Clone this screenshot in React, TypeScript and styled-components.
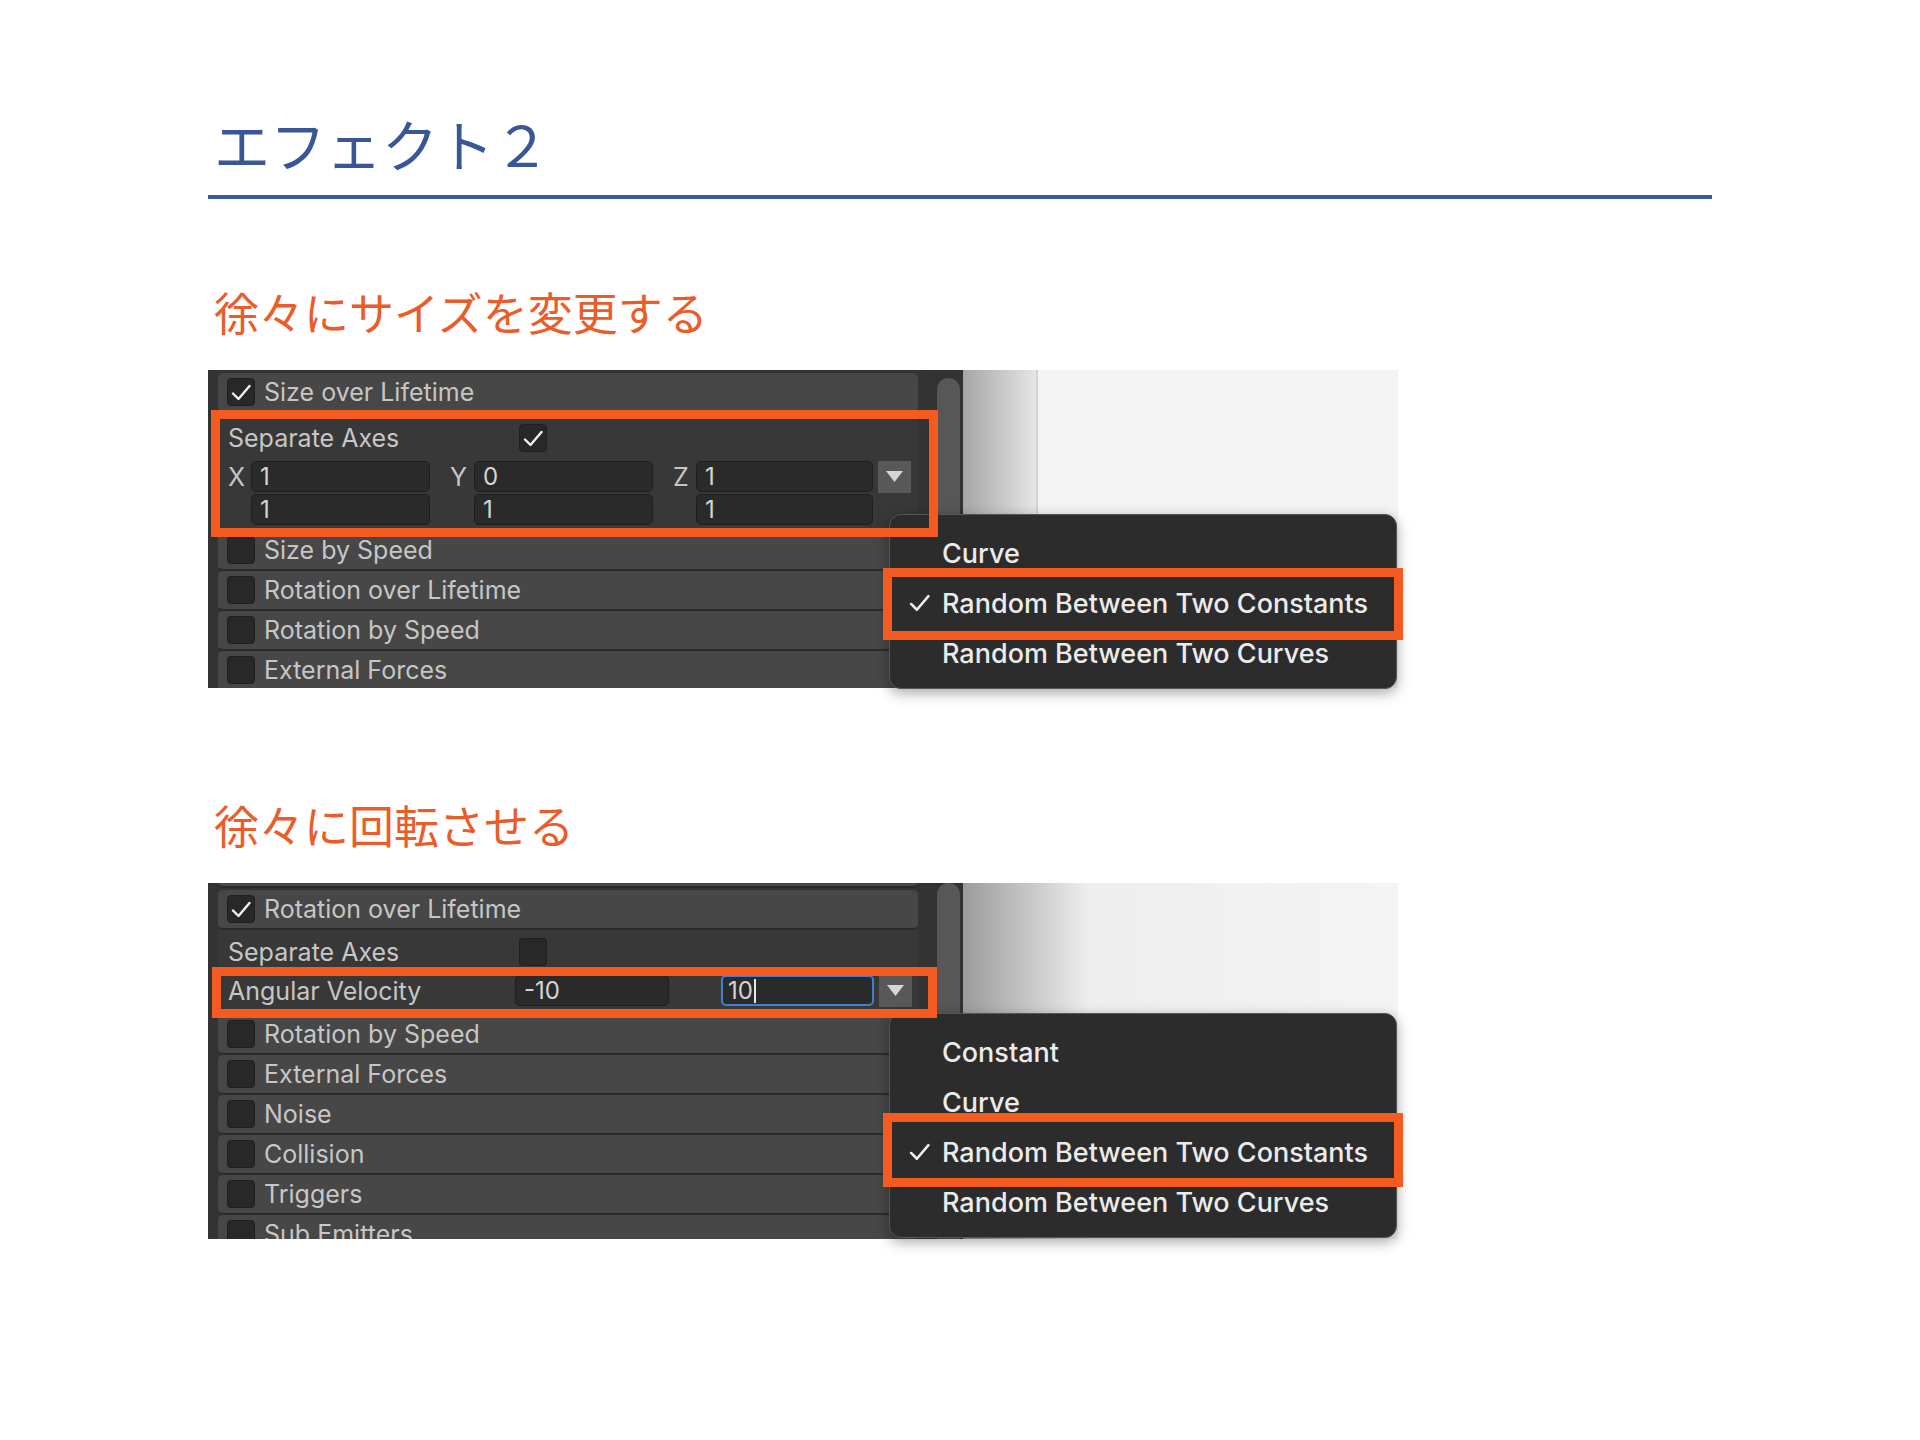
import React from "react";
import styled, { createGlobalStyle } from "styled-components";

const GlobalStyle = createGlobalStyle`
	body {
		margin: 0;
		background: #ffffff;
		font-family: "Noto Sans CJK JP", "Noto Sans", sans-serif;
	}
`;

const Page = styled.div`
	padding: 115px 0 160px 208px;
	width: 1504px;
`;

const Title = styled.h1`
	margin: 0 0 0 6px;
	font-size: 56px;
	line-height: 56px;
	font-weight: 400;
	color: #3a5795;
`;

const Rule = styled.div`
	margin-top: 24px;
	height: 4px;
	background: #3b5a98;
`;

const Heading = styled.h2<{ $top: number }>`
	margin: ${(p) => p.$top}px 0 36px 6px;
	font-size: 45px;
	line-height: 44px;
	font-weight: 400;
	color: #ea5d2a;
`;

const Panel = styled.div<{ $height: number }>`
	position: relative;
	display: flex;
	width: 1190px;
	height: ${(p) => p.$height}px;
`;

const Inspector = styled.div`
	display: flex;
	width: 755px;
	background: #383838;
	overflow: hidden;
`;

const InspectorBody = styled.div<{ $top: number }>`
	display: flex;
	flex-direction: column;
	width: 727px;
	box-sizing: border-box;
	padding: ${(p) => p.$top}px 17px 0 10px;
	background: #333333;
`;

const ScrollTrack = styled.div`
	width: 28px;
	padding: 0 3px 0 2px;
	box-sizing: border-box;
	background: #323232;
`;

const ScrollThumb = styled.div<{ $top: number }>`
	margin-top: ${(p) => p.$top}px;
	height: 100%;
	border-radius: 12px 12px 0 0;
	background: #575757;
`;

const Backdrop = styled.div<{ $stops: string }>`
	flex: 1;
	background: linear-gradient(to right, ${(p) => p.$stops});
`;

const Row = styled.div`
	flex-shrink: 0;
	display: flex;
	align-items: center;
	gap: 9px;
	height: 38px;
	padding-left: 9px;
	border-bottom: 2px solid #2a2a2a;
	border-radius: 5px;
	background: #474747;
	font-family: Inter, "Liberation Sans", sans-serif;
	font-size: 25px;
	color: #c6c6c6;
	white-space: nowrap;
`;

const Sliver = styled.div`
	flex-shrink: 0;
	height: 3px;
	margin-bottom: 2px;
	border-bottom: 2px solid #2a2a2a;
	border-radius: 0 0 5px 5px;
	background: #474747;
`;

const Box = styled.div`
	flex-shrink: 0;
	display: flex;
	align-items: center;
	justify-content: center;
	width: 28px;
	height: 28px;
	box-sizing: border-box;
	border: 1px solid #1f1f1f;
	border-radius: 4px;
	background: #282828;
`;

const ModuleBody = styled.div<{ $pad: string; $height: number }>`
	flex-shrink: 0;
	display: flex;
	flex-direction: column;
	height: ${(p) => p.$height}px;
	box-sizing: border-box;
	padding: ${(p) => p.$pad};
	background: #383838;
	font-family: Inter, "Liberation Sans", sans-serif;
	font-size: 25px;
	color: #c6c6c6;
`;

const SettingLine = styled.div`
	display: flex;
	align-items: center;
	height: 28px;
`;

const SettingLabel = styled.span<{ $width: number }>`
	width: ${(p) => p.$width}px;
	flex-shrink: 0;
	white-space: nowrap;
`;

const FieldRow = styled.div<{ $top: number }>`
	display: flex;
	align-items: center;
	height: 31px;
	margin-top: ${(p) => p.$top}px;
`;

const AxisLabel = styled.span<{ $width: number; $gap?: number }>`
	width: ${(p) => p.$width}px;
	margin-left: ${(p) => p.$gap ?? 0}px;
	flex-shrink: 0;
`;

const Field = styled.div<{ $width: number; $focused?: boolean; $gap?: number }>`
	display: flex;
	align-items: center;
	width: ${(p) => p.$width}px;
	height: 31px;
	margin-left: ${(p) => p.$gap ?? 0}px;
	box-sizing: border-box;
	padding-left: ${(p) => (p.$focused ? 5 : 8)}px;
	border: ${(p) => (p.$focused ? "2px solid #3e7fcf" : "1px solid #1f1f1f")};
	border-radius: 5px;
	background: #2a2a2a;
	color: #d4d4d4;
	font-size: 24px;
`;

const Caret = styled.span`
	width: 2px;
	height: 24px;
	margin-left: 1px;
	background: #e6e6e6;
`;

const DropButton = styled.div`
	display: flex;
	align-items: center;
	justify-content: center;
	width: 33px;
	height: 32px;
	margin-left: 5px;
	background: #585858;
`;

const Menu = styled.div<{ $top: number }>`
	position: absolute;
	left: 681px;
	top: ${(p) => p.$top}px;
	z-index: 1;
	width: 508px;
	box-sizing: border-box;
	padding: 13px 0 10px;
	border: 1px solid #565656;
	border-radius: 12px;
	background: #2c2c2c;
	box-shadow: 0 4px 14px rgba(0, 0, 0, 0.35);
`;

const MenuItem = styled.div`
	display: flex;
	align-items: center;
	height: 50px;
	padding-left: 19px;
	font-family: Inter, "Liberation Sans", sans-serif;
	font-size: 27px;
	font-weight: 500;
	color: #ebebeb;
	white-space: nowrap;
`;

const CheckSlot = styled.span`
	display: flex;
	align-items: center;
	width: 33px;
`;

const Callout = styled.div<{ $x: number; $y: number; $w: number; $h: number }>`
	position: absolute;
	left: ${(p) => p.$x}px;
	top: ${(p) => p.$y}px;
	z-index: 2;
	width: ${(p) => p.$w}px;
	height: ${(p) => p.$h}px;
	box-sizing: border-box;
	border: 9px solid #f45b20;
	pointer-events: none;
`;

function Tick({ size = 20 }: { size?: number }) {
	return (
		<svg width={size} height={size * 0.85} viewBox="0 0 20 17" fill="none">
			<path d="M2 9.5 L7.5 15 L18.5 2" stroke="#f0f0f0" strokeWidth="2.4" strokeLinecap="round" strokeLinejoin="round" />
		</svg>
	);
}

function Arrow() {
	return (
		<svg width="17" height="12" viewBox="0 0 17 12">
			<path d="M0 0 H17 L8.5 11 Z" fill="#d6d6d6" />
		</svg>
	);
}

function ModuleRow({ label, checked }: { label: string; checked?: boolean }) {
	return (
		<Row>
			<Box>{checked && <Tick />}</Box>
			{label}
		</Row>
	);
}

function CurveMenu({ top, items }: { top: number; items: string[] }) {
	return (
		<Menu $top={top}>
			{items.map((item) => (
				<MenuItem key={item}>
					<CheckSlot>{item === "Random Between Two Constants" && <Tick size={21} />}</CheckSlot>
					{item}
				</MenuItem>
			))}
		</Menu>
	);
}

function SizePanel() {
	return (
		<Panel $height={318}>
			<Inspector>
				<InspectorBody $top={3}>
					<ModuleRow label="Size over Lifetime" checked />
					<ModuleBody $pad="11px 0 4px 10px" $height={118}>
						<SettingLine>
							<SettingLabel $width={291}>Separate Axes</SettingLabel>
							<Box>
								<Tick />
							</Box>
						</SettingLine>
						<FieldRow $top={9}>
							<AxisLabel $width={23}>X</AxisLabel>
							<Field $width={179}>1</Field>
							<AxisLabel $width={24} $gap={20}>Y</AxisLabel>
							<Field $width={179}>0</Field>
							<AxisLabel $width={23} $gap={20}>Z</AxisLabel>
							<Field $width={177}>1</Field>
							<DropButton>
								<Arrow />
							</DropButton>
						</FieldRow>
						<FieldRow $top={2}>
							<AxisLabel $width={23} />
							<Field $width={179}>1</Field>
							<AxisLabel $width={24} $gap={20} />
							<Field $width={179}>1</Field>
							<AxisLabel $width={23} $gap={20} />
							<Field $width={177}>1</Field>
						</FieldRow>
					</ModuleBody>
					<ModuleRow label="Size by Speed" />
					<ModuleRow label="Rotation over Lifetime" />
					<ModuleRow label="Rotation by Speed" />
					<ModuleRow label="External Forces" />
				</InspectorBody>
				<ScrollTrack>
					<ScrollThumb $top={8} />
				</ScrollTrack>
			</Inspector>
			<Backdrop $stops="#a6a6a6 0px, #e6e6e6 73px, #d2d2d2 73px, #d2d2d2 75px, #f3f3f3 75px, #f4f4f4 100%" />
			<CurveMenu top={144} items={["Curve", "Random Between Two Constants", "Random Between Two Curves"]} />
			<Callout $x={3} $y={40} $w={727} $h={127} />
			<Callout $x={675} $y={198} $w={520} $h={72} />
		</Panel>
	);
}

function RotationPanel() {
	return (
		<Panel $height={356}>
			<Inspector>
				<InspectorBody $top={0}>
					<Sliver />
					<ModuleRow label="Rotation over Lifetime" checked />
					<ModuleBody $pad="8px 0 8px 10px" $height={85}>
						<SettingLine>
							<SettingLabel $width={291}>Separate Axes</SettingLabel>
							<Box />
						</SettingLine>
						<FieldRow $top={9}>
							<SettingLabel $width={287}>Angular Velocity</SettingLabel>
							<Field $width={154}>-10</Field>
							<Field $width={153} $gap={52} $focused>
								10
								<Caret />
							</Field>
							<DropButton>
								<Arrow />
							</DropButton>
						</FieldRow>
					</ModuleBody>
					<ModuleRow label="Rotation by Speed" />
					<ModuleRow label="External Forces" />
					<ModuleRow label="Noise" />
					<ModuleRow label="Collision" />
					<ModuleRow label="Triggers" />
					<ModuleRow label="Sub Emitters" />
				</InspectorBody>
				<ScrollTrack>
					<ScrollThumb $top={0} />
				</ScrollTrack>
			</Inspector>
			<Backdrop $stops="#9c9c9c 0px, #eeeeee 125px, #f4f4f4 100%" />
			<CurveMenu
				top={130}
				items={["Constant", "Curve", "Random Between Two Constants", "Random Between Two Curves"]}
			/>
			<Callout $x={4} $y={84} $w={725} $h={51} />
			<Callout $x={675} $y={230} $w={520} $h={74} />
		</Panel>
	);
}

export default function App() {
	return (
		<>
			<GlobalStyle />
			<Page>
				<Title>エフェクト２</Title>
				<Rule />
				<Heading $top={91}>徐々にサイズを変更する</Heading>
				<SizePanel />
				<Heading $top={115}>徐々に回転させる</Heading>
				<RotationPanel />
			</Page>
		</>
	);
}
